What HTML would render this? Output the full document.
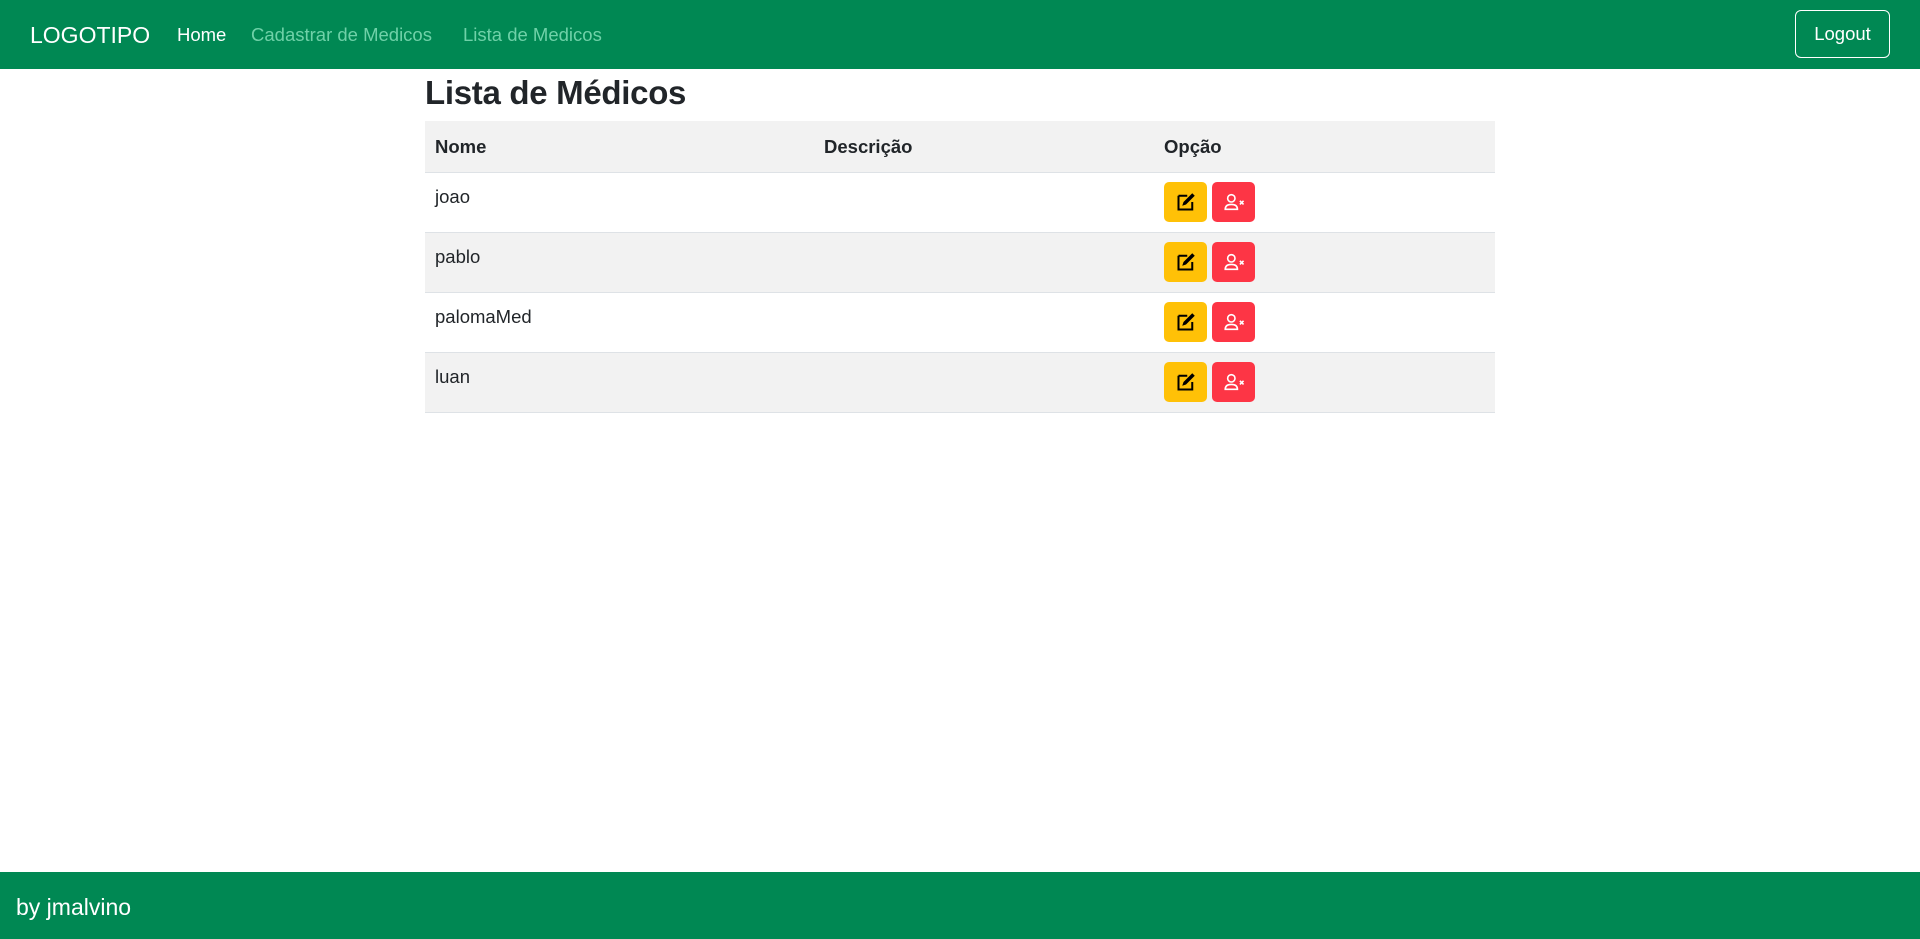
<!DOCTYPE html>
<html><head><meta charset="utf-8"><style>
*{box-sizing:border-box;margin:0;padding:0}
body{width:1920px;height:939px;position:relative;font-family:"Liberation Sans",sans-serif;color:#212529;background:#fff;overflow:hidden}
.nav{position:absolute;left:0;top:0;width:1920px;height:69px;background:#008853}
.brand{position:absolute;left:30px;top:22px;font-size:23px;color:#fff}
.nl{position:absolute;top:24px;font-size:18.5px;color:#6fd1a8}
.logout{position:absolute;left:1795px;top:10px;width:95px;height:48px;border:1px solid #fff;border-radius:6px;color:#fff;font-size:18.5px;text-align:center;line-height:46px}
h2{position:absolute;left:425px;top:74px;font-size:33px;font-weight:bold;letter-spacing:-0.3px}
table{position:absolute;left:425px;top:121px;width:1070px;border-collapse:collapse;font-size:18.5px}
th{text-align:left;font-weight:bold;height:51px;padding-left:10px;padding-top:2px;background:#f2f2f2;border-bottom:1px solid #dee2e6}
td{height:60px;padding-left:10px;border-bottom:1px solid #dee2e6;vertical-align:top;padding-top:13px}
tr.s td{background:#f2f2f2}
.b{display:inline-block;width:43px;height:40px;border-radius:5px;vertical-align:top;margin-right:5px;position:relative}
.y{background:#ffc107}.r{background:#fd3545}
.b svg{position:absolute;left:12px;top:10px}
.foot{position:absolute;left:0;top:872px;width:1920px;height:67px;background:#008853;color:#fff;font-size:23px;padding:22px 16px}
</style></head><body>
<div class="nav"><span class="brand">LOGOTIPO</span>
<span class="nl" style="left:177px;color:#fff">Home</span>
<span class="nl" style="left:251px">Cadastrar de Medicos</span>
<span class="nl" style="left:463px">Lista de Medicos</span>
<div class="logout">Logout</div></div>
<h2>Lista de Médicos</h2>
<table>
<tr><th style="width:389px">Nome</th><th style="width:340px">Descrição</th><th>Opção</th></tr>
<tr><td>joao</td><td></td><td style="padding-top:9px"><span class="b y"><svg width="20" height="20" viewBox="0 0 16 16"><path d="M2 3h7M2 3v11h11V8" fill="none" stroke="#000" stroke-width="1.6"/><path d="M13 1l2 2-7 7-3 1 1-3z" fill="#000"/></svg></span><span class="b r"><svg width="22" height="20" viewBox="0 0 18 16"><circle cx="6" cy="5" r="3" fill="none" stroke="#fff" stroke-width="1.3"/><path d="M1 14c0-3 2-4 5-4s5 1 5 4z" fill="none" stroke="#fff" stroke-width="1.3"/><path d="M13 7l3 3M16 7l-3 3" stroke="#fff" stroke-width="1.3"/></svg></span></td></tr>
<tr class="s"><td>pablo</td><td></td><td style="padding-top:9px"><span class="b y"><svg width="20" height="20" viewBox="0 0 16 16"><path d="M2 3h7M2 3v11h11V8" fill="none" stroke="#000" stroke-width="1.6"/><path d="M13 1l2 2-7 7-3 1 1-3z" fill="#000"/></svg></span><span class="b r"><svg width="22" height="20" viewBox="0 0 18 16"><circle cx="6" cy="5" r="3" fill="none" stroke="#fff" stroke-width="1.3"/><path d="M1 14c0-3 2-4 5-4s5 1 5 4z" fill="none" stroke="#fff" stroke-width="1.3"/><path d="M13 7l3 3M16 7l-3 3" stroke="#fff" stroke-width="1.3"/></svg></span></td></tr>
<tr><td>palomaMed</td><td></td><td style="padding-top:9px"><span class="b y"><svg width="20" height="20" viewBox="0 0 16 16"><path d="M2 3h7M2 3v11h11V8" fill="none" stroke="#000" stroke-width="1.6"/><path d="M13 1l2 2-7 7-3 1 1-3z" fill="#000"/></svg></span><span class="b r"><svg width="22" height="20" viewBox="0 0 18 16"><circle cx="6" cy="5" r="3" fill="none" stroke="#fff" stroke-width="1.3"/><path d="M1 14c0-3 2-4 5-4s5 1 5 4z" fill="none" stroke="#fff" stroke-width="1.3"/><path d="M13 7l3 3M16 7l-3 3" stroke="#fff" stroke-width="1.3"/></svg></span></td></tr>
<tr class="s"><td>luan</td><td></td><td style="padding-top:9px"><span class="b y"><svg width="20" height="20" viewBox="0 0 16 16"><path d="M2 3h7M2 3v11h11V8" fill="none" stroke="#000" stroke-width="1.6"/><path d="M13 1l2 2-7 7-3 1 1-3z" fill="#000"/></svg></span><span class="b r"><svg width="22" height="20" viewBox="0 0 18 16"><circle cx="6" cy="5" r="3" fill="none" stroke="#fff" stroke-width="1.3"/><path d="M1 14c0-3 2-4 5-4s5 1 5 4z" fill="none" stroke="#fff" stroke-width="1.3"/><path d="M13 7l3 3M16 7l-3 3" stroke="#fff" stroke-width="1.3"/></svg></span></td></tr>
</table>
<div class="foot">by jmalvino</div>
</body></html>
